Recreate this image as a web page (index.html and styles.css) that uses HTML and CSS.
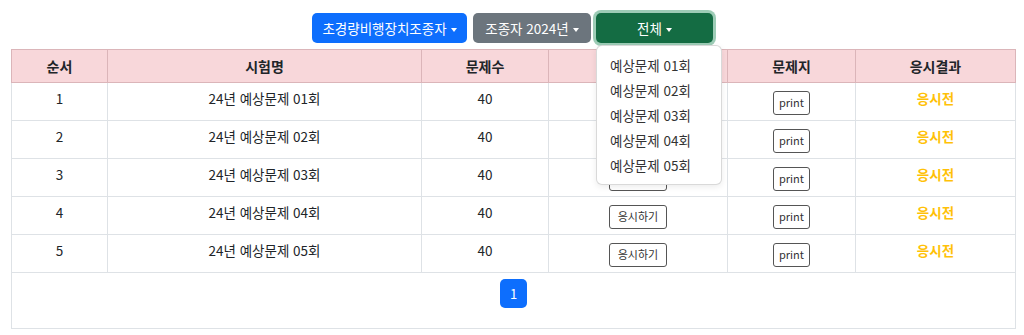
FILE: index.html
```html
<!DOCTYPE html>
<html lang="ko">
<head>
<meta charset="utf-8">
<title>시험 목록</title>
<link rel="stylesheet" href="styles.css">
</head>
<body>
<div class="page">
  <div class="toolbar">
    <button class="btn btn-blue caret">초경량비행장치조종자</button>
    <button class="btn btn-gray caret">조종자 2024년</button>
    <div class="dropdown">
      <button class="btn btn-green caret">전체</button>
      <ul class="menu">
        <li>예상문제 01회</li>
        <li>예상문제 02회</li>
        <li>예상문제 03회</li>
        <li>예상문제 04회</li>
        <li>예상문제 05회</li>
      </ul>
    </div>
  </div>
  <table class="exam">
    <colgroup>
      <col class="c1"><col class="c2"><col class="c3"><col class="c4"><col class="c5"><col class="c6">
    </colgroup>
    <thead>
      <tr><th>순서</th><th>시험명</th><th>문제수</th><th>응시</th><th>문제지</th><th>응시결과</th></tr>
    </thead>
    <tbody>
      <tr><td>1</td><td>24년 예상문제 01회</td><td>40</td><td><span class="sbtn take">응시하기</span></td><td><span class="sbtn">print</span></td><td class="status">응시전</td></tr>
      <tr><td>2</td><td>24년 예상문제 02회</td><td>40</td><td><span class="sbtn take">응시하기</span></td><td><span class="sbtn">print</span></td><td class="status">응시전</td></tr>
      <tr><td>3</td><td>24년 예상문제 03회</td><td>40</td><td><span class="sbtn take">응시하기</span></td><td><span class="sbtn">print</span></td><td class="status">응시전</td></tr>
      <tr><td>4</td><td>24년 예상문제 04회</td><td>40</td><td><span class="sbtn take">응시하기</span></td><td><span class="sbtn">print</span></td><td class="status">응시전</td></tr>
      <tr><td>5</td><td>24년 예상문제 05회</td><td>40</td><td><span class="sbtn take">응시하기</span></td><td><span class="sbtn">print</span></td><td class="status">응시전</td></tr>
    </tbody>
    <tfoot>
      <tr><td colspan="6"><span class="page-link">1</span></td></tr>
    </tfoot>
  </table>
</div>
</body>
</html>
```

FILE: styles.css
```css
* { box-sizing: border-box; }
html, body { margin: 0; padding: 0; background: #fff; }
body {
  font-family: "Noto Sans CJK KR", "Noto Sans", sans-serif;
  font-size: 13.5px;
  color: #212529;
}
.page { padding: 0 0 0 11px; width: 1016px; }

.toolbar {
  display: flex;
  justify-content: center;
  gap: 5px;
  padding-top: 13px;
  margin-bottom: 6px;
  padding-right: 2px;
}
.btn {
  height: 30px;
  border: 0;
  border-radius: 5px;
  font-family: inherit;
  font-size: 13.5px;
  line-height: 30px;
  padding: 0 8px;
  color: #fff;
  cursor: pointer;
}
.caret::after {
  content: "";
  display: inline-block;
  margin-left: 4px;
  vertical-align: 2px;
  border-top: 4px solid #fff;
  border-left: 3.5px solid transparent;
  border-right: 3.5px solid transparent;
}
.btn-blue { background: #0d6efd; width: 155px; margin-right: 1px; }
.btn-gray { background: #6c757d; width: 118px; }
.btn-green {
  background: #146c43;
  width: 117px;
  box-shadow: 0 0 0 3px rgba(60, 153, 110, 0.5);
}
.dropdown { position: relative; }
.menu {
  position: absolute;
  left: 0;
  top: 32px;
  width: 126px;
  margin: 0;
  padding: 7px 0 6px;
  list-style: none;
  background: #fff;
  border: 1px solid rgba(0, 0, 0, 0.15);
  border-radius: 6px;
  box-shadow: 0 2px 6px rgba(0, 0, 0, 0.08);
  z-index: 5;
}
.menu li {
  padding: 2px 13px;
  line-height: 21px;
  color: #333;
  white-space: nowrap;
}

.exam {
  width: 1004px;
  border-collapse: collapse;
  table-layout: fixed;
  border: 1px solid #dee2e6;
}
.c1 { width: 96px; }
.c2 { width: 314px; }
.c3 { width: 127px; }
.c4 { width: 179px; }
.c5 { width: 128px; }
.c6 { width: 160px; }

.exam th {
  background: #f8d7da;
  border: 1px solid #dbb5b9;
  height: 33px;
  padding: 0 8px;
  line-height: 21px;
  font-weight: 700;
  font-size: 14px;
  text-align: center;
  vertical-align: middle;
}
.exam tbody td {
  border: 1px solid #dee2e6;
  height: 38px;
  padding: 5px 8px 0;
  line-height: 21px;
  text-align: center;
  vertical-align: top;
}
.sbtn {
  display: inline-block;
  margin-top: 3px;
  height: 24px;
  line-height: 21px;
  padding: 0 5px;
  font-size: 11px;
  border: 1px solid #555;
  border-radius: 3px;
  color: #333;
  background: #fff;
}
.sbtn.take { padding: 0 8px; }
.status {
  color: #ffc107;
  font-weight: 700;
}
.exam tfoot td {
  border: 1px solid #dee2e6;
  height: 56px;
  padding: 6px 0 0;
  text-align: center;
  vertical-align: top;
}
.page-link {
  display: inline-block;
  width: 27px;
  height: 29px;
  line-height: 29px;
  background: #0d6efd;
  color: #fff;
  border-radius: 5px;
  text-align: center;
  font-size: 13px;
}
```
